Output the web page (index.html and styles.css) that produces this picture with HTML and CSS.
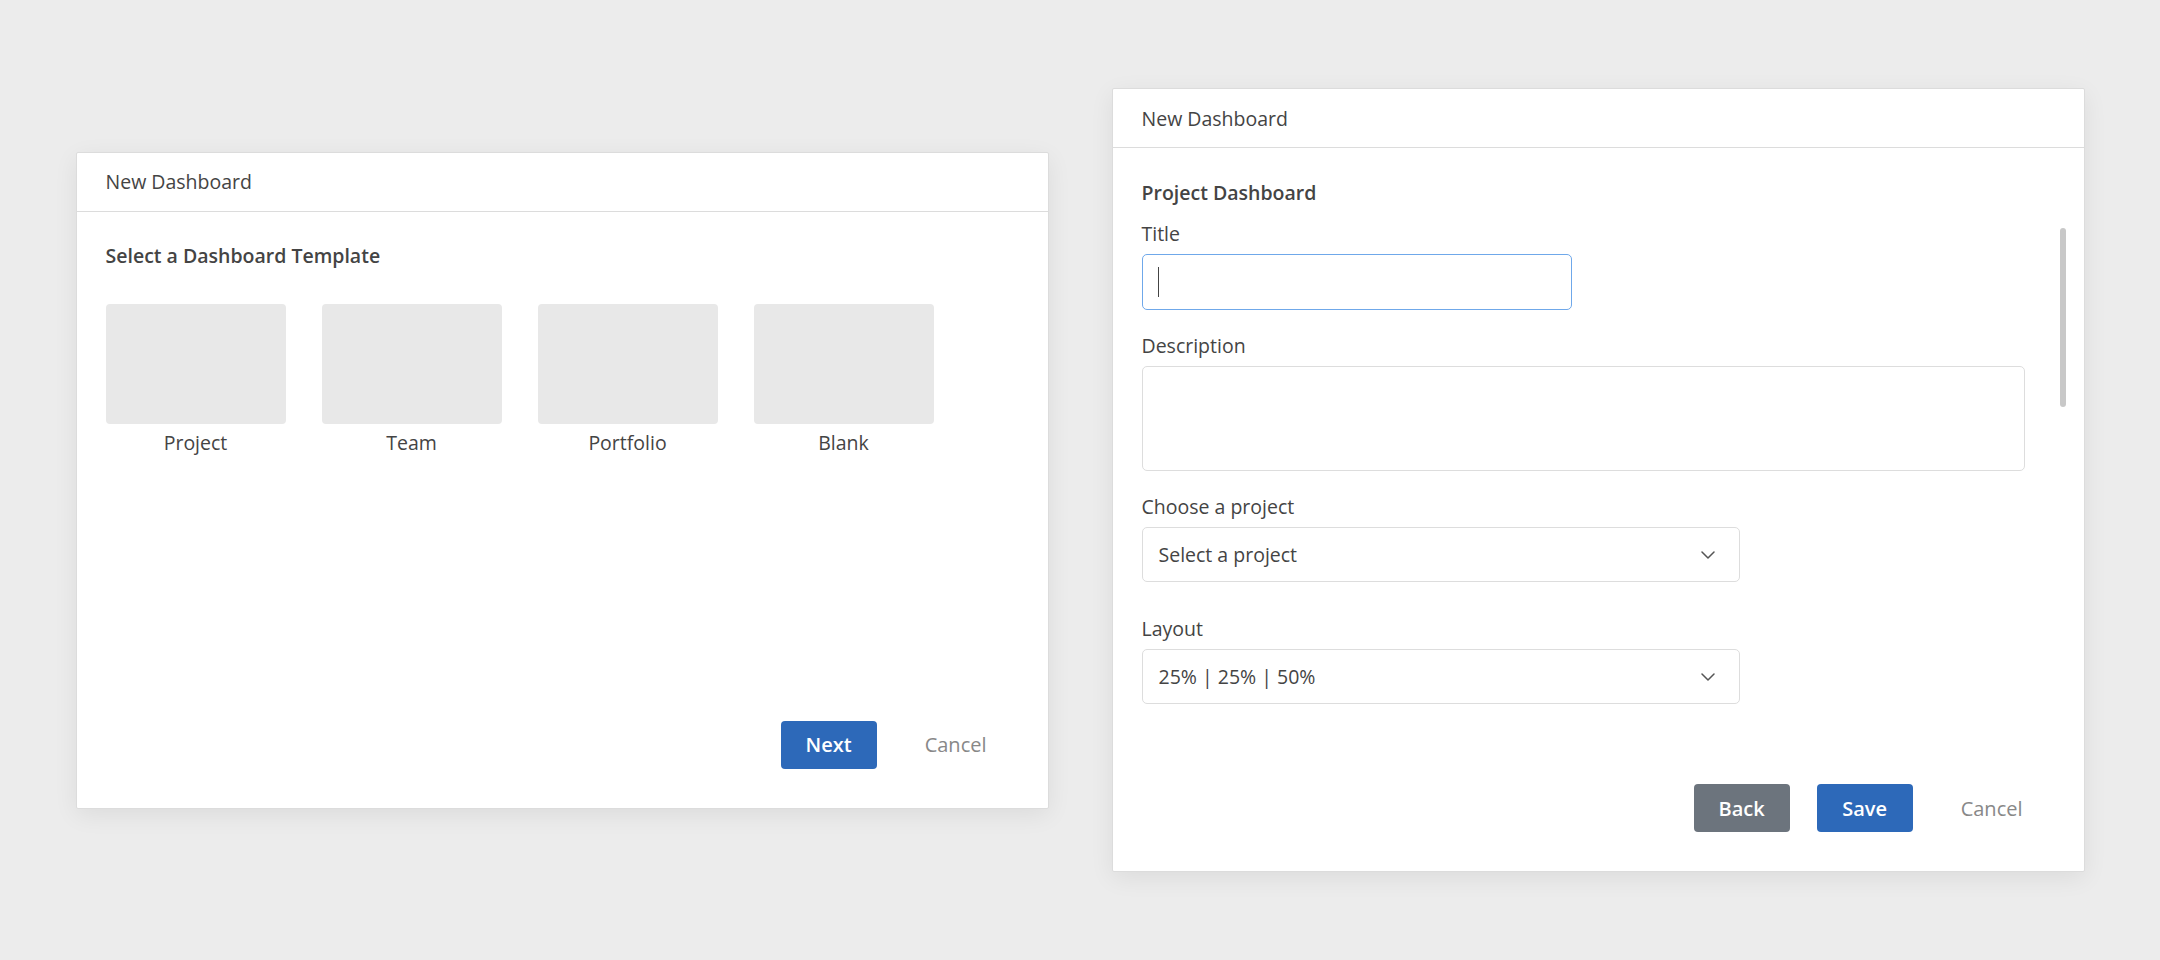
FILE: index.html
```html
<!DOCTYPE html>
<html lang="en">
<head>
<meta charset="utf-8">
<title>New Dashboard</title>
<link rel="stylesheet" href="styles.css">
</head>
<body>
<main class="stage">
  <section class="dialog dialog-templates">
    <header class="dialog-header">New Dashboard</header>
    <div class="dialog-body">
      <h2 class="section-title">Select a Dashboard Template</h2>
      <div class="templates">
        <div class="template"><div class="thumb"></div><span class="template-name">Project</span></div>
        <div class="template"><div class="thumb"></div><span class="template-name">Team</span></div>
        <div class="template"><div class="thumb"></div><span class="template-name">Portfolio</span></div>
        <div class="template"><div class="thumb"></div><span class="template-name">Blank</span></div>
      </div>
    </div>
    <footer class="dialog-footer">
      <button class="btn btn-primary">Next</button>
      <button class="btn btn-link">Cancel</button>
    </footer>
  </section>

  <section class="dialog dialog-form">
    <header class="dialog-header">New Dashboard</header>
    <div class="dialog-body form-body">
      <h2 class="section-title form-title">Project Dashboard</h2>
      <div class="field">
        <label class="field-label">Title</label>
        <div class="input input-focus"><span class="caret"></span></div>
      </div>
      <div class="field field-gap">
        <label class="field-label">Description</label>
        <div class="textarea"></div>
      </div>
      <div class="field field-gap">
        <label class="field-label">Choose a project</label>
        <div class="select">
          <span>Select a project</span>
          <svg class="chevron" width="14" height="8" viewBox="0 0 14 8"><path d="M1 1l6 6 6-6" fill="none" stroke="#555" stroke-width="1.5" stroke-linecap="round" stroke-linejoin="round"/></svg>
        </div>
      </div>
      <div class="field field-gap-lg">
        <label class="field-label">Layout</label>
        <div class="select">
          <span>25% | 25% | 50%</span>
          <svg class="chevron" width="14" height="8" viewBox="0 0 14 8"><path d="M1 1l6 6 6-6" fill="none" stroke="#555" stroke-width="1.5" stroke-linecap="round" stroke-linejoin="round"/></svg>
        </div>
      </div>
    </div>
    <div class="scroll-thumb"></div>
    <footer class="dialog-footer">
      <button class="btn btn-secondary">Back</button>
      <button class="btn btn-primary">Save</button>
      <button class="btn btn-link">Cancel</button>
    </footer>
  </section>
</main>
</body>
</html>
```

FILE: styles.css
```css
* { box-sizing: border-box; }

html, body {
  margin: 0;
  padding: 0;
  height: 100%;
}

body {
  background: #ececec;
  font-family: "Open Sans", "Noto Sans", sans-serif;
  color: #444;
}

.stage {
  height: 960px;
  display: flex;
  align-items: center;
  justify-content: center;
  gap: 63px;
}

.dialog {
  position: relative;
  width: 973px;
  background: #fff;
  border: 1px solid #dcdcdc;
  border-radius: 2px;
  box-shadow: 0 6px 24px rgba(0, 0, 0, 0.07);
  display: flex;
  flex-direction: column;
}

.dialog-templates { height: 657px; }
.dialog-form { height: 784px; }

.dialog-header {
  height: 59px;
  flex: none;
  border-bottom: 1px solid #dcdcdc;
  padding: 0 29px;
  display: flex;
  align-items: center;
  font-size: 19.5px;
  color: #444;
}

.dialog-body {
  flex: 1;
  padding: 31px 29px 0;
}

.section-title {
  margin: 0;
  font-size: 19.5px;
  line-height: 26px;
  font-weight: 600;
  color: #444;
}

.templates {
  display: flex;
  gap: 36px;
  margin-top: 35px;
}

.template {
  width: 180px;
  display: flex;
  flex-direction: column;
  align-items: center;
}

.thumb {
  width: 180px;
  height: 120px;
  background: #e8e8e8;
  border-radius: 4px;
}

.template-name {
  margin-top: 6px;
  font-size: 19.5px;
  line-height: 26px;
  color: #444;
}

.dialog-footer {
  flex: none;
  display: flex;
  justify-content: flex-end;
  gap: 27px;
  padding: 0 40px 39px;
}

.btn {
  height: 48px;
  border: none;
  border-radius: 4px;
  font-family: inherit;
  font-size: 20px;
  cursor: pointer;
}

.btn-primary,
.btn-secondary {
  width: 96px;
  color: #fff;
  font-weight: 600;
}

.btn-primary { background: #2d69b9; }
.btn-secondary { background: #6c747d; }

.btn-link {
  background: transparent;
  color: #888;
  padding: 0 21px;
}

.form-body { padding-top: 32px; }

.form-title { margin-bottom: 15px; }

.field { display: flex; flex-direction: column; }
.field-gap { margin-top: 23px; }
.field-gap-lg { margin-top: 34px; }

.field-label {
  font-size: 19.5px;
  line-height: 26px;
  color: #444;
  margin-bottom: 7px;
}

.input {
  width: 430px;
  height: 56px;
  border: 1px solid #d8d8d8;
  border-radius: 5px;
  padding: 12px 15px;
}

.input-focus {
  border: 1.5px solid #6fa8ea;
}

.caret {
  display: block;
  width: 1.5px;
  height: 30px;
  background: #444;
}

.textarea {
  width: 883px;
  height: 105px;
  border: 1.5px solid #dddddd;
  border-radius: 5px;
}

.select {
  width: 598px;
  height: 55px;
  border: 1.5px solid #dddddd;
  border-radius: 5px;
  padding: 0 24px 0 16px;
  display: flex;
  align-items: center;
  justify-content: space-between;
  font-size: 19.5px;
  color: #444;
}

.chevron { flex: none; }

.scroll-thumb {
  position: absolute;
  top: 139px;
  right: 18px;
  width: 6px;
  height: 179px;
  border-radius: 3px;
  background: #c8c8c8;
}
```
